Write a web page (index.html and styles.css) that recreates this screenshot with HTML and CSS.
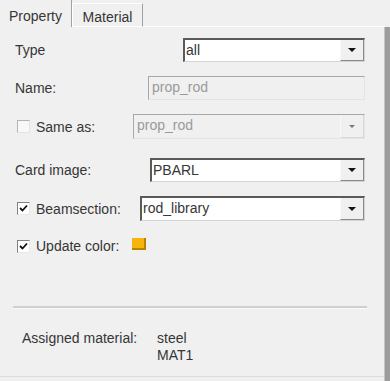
FILE: index.html
```html
<!DOCTYPE html>
<html lang="en">

<head>
  <meta charset="UTF-8">
  <meta name="viewport" content="width=device-width, initial-scale=1.0">
  <title>Property</title>
  <link rel="stylesheet" href="styles.css">
</head>

<body>

  <div class="window">
    <!-- Tabs -->
    <div class="tabs">
      <div class="tab tab-active">Property</div>
      <div class="tab">Material</div>
      <div class="tab-fill"></div>
    </div>

    <div class="body">
      <div class="panel">
        <div class="row row-type">
          <span class="label label-type">Type</span>
          <div class="combo">
            <span class="value">all</span>
            <span class="drop"><i class="arrow"></i></span>
          </div>
        </div>

        <div class="row row-name">
          <span class="label label-name">Name:</span>
          <div class="field field-disabled">
            <span class="value">prop_rod</span>
          </div>
        </div>

        <div class="row row-same">
          <span class="label label-same"><i class="check"></i>Same as:</span>
          <div class="combo combo-disabled">
            <span class="value">prop_rod</span>
            <span class="drop"><i class="arrow arrow-small"></i></span>
          </div>
        </div>

        <div class="row row-card">
          <span class="label label-card">Card image:</span>
          <div class="combo">
            <span class="value">PBARL</span>
            <span class="drop"><i class="arrow"></i></span>
          </div>
        </div>

        <div class="row row-beam">
          <span class="label label-beam">
            <i class="check"><svg width="9" height="9" viewBox="0 0 9 9"><polyline points="1,4 3.5,6.5 8,1.5" fill="none" stroke="#111" stroke-width="1.8"/></svg></i>Beamsection:
          </span>
          <div class="combo">
            <span class="value">rod_library</span>
            <span class="drop"><i class="arrow"></i></span>
          </div>
        </div>

        <div class="row row-color">
          <span class="label">
            <i class="check"><svg width="9" height="9" viewBox="0 0 9 9"><polyline points="1,4 3.5,6.5 8,1.5" fill="none" stroke="#111" stroke-width="1.8"/></svg></i>Update color:
          </span>
          <span class="swatch"></span>
        </div>

        <div class="separator"></div>

        <div class="assigned">
          <span class="assigned-label">Assigned material:</span>
          <div class="assigned-values">
            <span>steel</span>
            <span>MAT1</span>
          </div>
        </div>
      </div>
      <div class="edge"></div>
    </div>
  </div>

</body>

</html>
```

FILE: styles.css
```css
body {
  margin: 0;
  background-color: #f0f0f0;
  font-family: "Liberation Sans", Arial, sans-serif;
  font-size: 14px;
  color: #363636;
}

.window {
  width: 390px;
  height: 381px;
  display: flex;
  flex-direction: column;
  overflow: hidden;
}

/* Tabs */
.tabs {
  display: flex;
  height: 27px;
  flex: 0 0 27px;
}

.tab {
  box-sizing: border-box;
  width: 71px;
  margin-top: 3px;
  padding-top: 5px;
  text-align: center;
  border-top: 1px solid #fff;
  border-left: 1px solid #fff;
  border-right: 1px solid #a0a0a0;
  border-bottom: 1px solid #fff;
}

.tab-active {
  width: 72px;
  margin-top: 0;
  padding-top: 8px;
  border-top: none;
  border-left: none;
  border-bottom: none;
}

.tab-fill {
  flex: 1;
  border-bottom: 1px solid #fff;
  margin-right: 5px;
}

.body {
  flex: 1;
  display: flex;
}

.panel {
  flex: 1;
  padding: 0 19px 0 15px;
  border-bottom: 1px solid #dcdcdc;
  margin-bottom: 4px;
}

.edge {
  flex: 0 0 5px;
  background-color: #9c9c9c;
  border-left: 1px solid #c4c4c4;
}

/* Rows */
.row {
  display: flex;
  align-items: center;
  height: 24px;
}

.row-type {
  margin-top: 11px;
}

.row-name {
  margin-top: 14px;
}

.row-same {
  margin-top: 14px;
  height: 25px;
}

.row-card {
  margin-top: 19px;
}

.row-beam {
  margin-top: 14px;
  height: 25px;
}

.row-color {
  margin-top: 13px;
}

.label {
  display: flex;
  align-items: center;
  flex: 0 0 auto;
}

.label-type {
  width: 168px;
}

.label-name {
  width: 133px;
}

.label-same {
  width: 118px;
}

.label-card {
  width: 135px;
}

.label-beam {
  width: 125px;
}

.check {
  box-sizing: border-box;
  width: 13px;
  height: 13px;
  margin: 0 6px 0 2px;
  background-color: #fff;
  border-top: 1px solid #808080;
  border-left: 1px solid #808080;
  border-right: 1px solid #e8e8e8;
  border-bottom: 1px solid #e8e8e8;
  display: flex;
  align-items: center;
  justify-content: center;
}

.label-same .check {
  background-color: #f8f8f8;
  border-color: #b4b4b4 #e4e4e4 #e4e4e4 #b4b4b4;
}

/* Combos and fields */
.combo,
.field {
  flex: 1;
  height: 100%;
  box-sizing: border-box;
  display: flex;
  background-color: #fff;
  border-top: 2px solid #5a5a5a;
  border-left: 2px solid #5a5a5a;
  border-right: 1px solid #d4d4d4;
  border-bottom: 1px solid #d4d4d4;
}

.combo-disabled,
.field-disabled {
  background-color: #f0f0f0;
  border-top: 1px solid #a8a8a8;
  border-left: 1px solid #a8a8a8;
  border-right: 1px solid #e4e4e4;
  border-bottom: 1px solid #e4e4e4;
  color: #9a9a9a;
}

.value {
  flex: 1;
  padding-left: 1px;
  line-height: 20px;
}

.field-disabled .value,
.combo-disabled .value {
  padding-left: 3px;
}

.drop {
  width: 22px;
  background-color: #f0f0f0;
  border-left: 1px solid #f8f8f8;
  border-bottom: 1px solid #8a8a8a;
  border-right: 1px solid #8a8a8a;
  display: flex;
  align-items: center;
  justify-content: center;
}

.combo-disabled .drop {
  border-bottom-color: #d8d8d8;
  border-right-color: #d8d8d8;
}

.arrow {
  width: 0;
  height: 0;
  border-left: 4px solid transparent;
  border-right: 4px solid transparent;
  border-top: 4px solid #111;
}

.arrow-small {
  border-left-width: 3px;
  border-right-width: 3px;
  border-top: 3px solid #777;
}

.swatch {
  width: 12px;
  height: 10px;
  margin-left: 13px;
  margin-top: -5px;
  background-color: #f6b50c;
  border-right: 2px solid #b88400;
  border-bottom: 2px solid #b88400;
}

/* Bottom part */
.separator {
  margin: 48px -2px 0 -2px;
  border-top: 2px solid #cfcfcf;
  border-bottom: 1px solid #fafafa;
}

.assigned {
  display: flex;
  margin-top: 21px;
  padding-left: 7px;
  line-height: 17px;
}

.assigned-label {
  width: 135px;
}

.assigned-values {
  display: flex;
  flex-direction: column;
}
```
